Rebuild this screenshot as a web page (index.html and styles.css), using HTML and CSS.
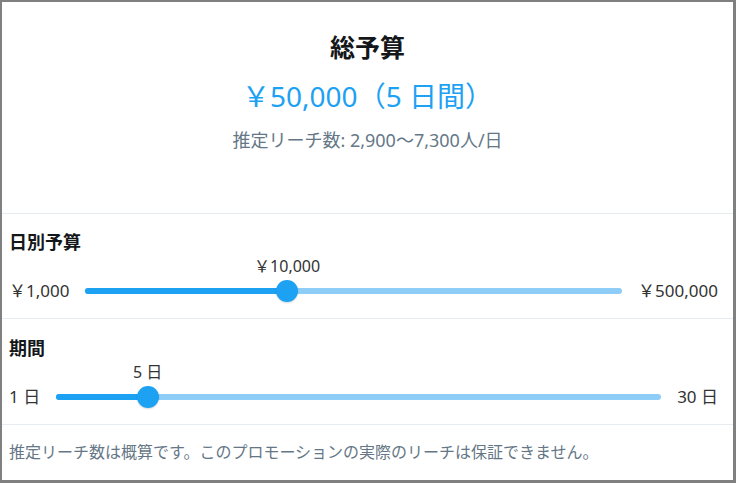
FILE: index.html
```html
<!DOCTYPE html>
<html lang="ja">
<head>
    <meta charset="UTF-8">
    <meta name="viewport" content="width=device-width, initial-scale=1.0">
    <title>予算</title>
    <link rel="stylesheet" href="styles.css">
</head>
<body>
    <div class="frame">
        <div class="summary">
            <h1>総予算</h1>
            <div class="total">￥50,000（5 日間）</div>
            <div class="reach">推定リーチ数: 2,900〜7,300人/日</div>
        </div>

        <div class="section">
            <div class="section-title">日別予算</div>
            <div class="slider-row">
                <span class="edge">￥1,000</span>
                <div class="slider">
                    <div class="value-line">
                        <span class="value" style="left: calc(11px + 0.3705 * (100% - 22px))">￥10,000</span>
                    </div>
                    <div class="track">
                        <div class="rail"></div>
                        <div class="fill" style="width: calc(11px + 0.3705 * (100% - 22px))"></div>
                        <div class="thumb" style="left: calc(11px + 0.3705 * (100% - 22px))"></div>
                    </div>
                </div>
                <span class="edge">￥500,000</span>
            </div>
        </div>

        <div class="section">
            <div class="section-title">期間</div>
            <div class="slider-row">
                <span class="edge">1 日</span>
                <div class="slider">
                    <div class="value-line">
                        <span class="value" style="left: calc(11px + 0.1379 * (100% - 22px))">5 日</span>
                    </div>
                    <div class="track">
                        <div class="rail"></div>
                        <div class="fill" style="width: calc(11px + 0.1379 * (100% - 22px))"></div>
                        <div class="thumb" style="left: calc(11px + 0.1379 * (100% - 22px))"></div>
                    </div>
                </div>
                <span class="edge">30 日</span>
            </div>
        </div>

        <div class="note">推定リーチ数は概算です。このプロモーションの実際のリーチは保証できません。</div>
    </div>
</body>
</html>
```

FILE: styles.css
```css
* {
    margin: 0;
    padding: 0;
    box-sizing: border-box;
    font-family: 'Noto Sans', 'Noto Sans CJK JP', sans-serif;
}

body {
    background: #fff;
    color: #14171a;
}

.frame {
    width: 736px;
    height: 483px;
    border: 2px solid #808080;
    border-right-width: 3px;
    border-bottom-width: 3px;
    background: #fff;
    overflow: hidden;
}

.summary {
    text-align: center;
    padding: 30px 0 61px;
    border-bottom: 1px solid #e6ecf0;
}

h1 {
    font-size: 25px;
    line-height: 30px;
    font-weight: 700;
}

.total {
    margin-top: 14px;
    font-size: 28px;
    line-height: 40px;
    color: #1da1f2;
}

.reach {
    margin-top: 12px;
    font-size: 18px;
    line-height: 24px;
    color: #657786;
}

.section {
    padding: 18px 15px 16px 7px;
    border-bottom: 1px solid #e6ecf0;
}

.section + .section {
    padding-top: 19px;
}

.section-title {
    font-size: 18px;
    line-height: 20px;
    font-weight: 700;
}

.slider-row {
    display: flex;
    align-items: flex-end;
    gap: 16px;
    margin-top: 4px;
}

.edge {
    font-size: 17px;
    line-height: 22px;
    color: #333;
    white-space: nowrap;
}

.slider {
    flex: 1;
}

.value-line {
    position: relative;
    height: 20px;
    margin-bottom: 4px;
}

.value {
    position: absolute;
    top: 0;
    transform: translateX(-50%);
    font-size: 16px;
    line-height: 20px;
    color: #333;
    white-space: nowrap;
}

.track {
    position: relative;
    height: 22px;
}

.rail,
.fill {
    position: absolute;
    left: 0;
    top: 8px;
    height: 6px;
    border-radius: 3px;
}

.rail {
    right: 0;
    background: #8ecdf8;
}

.fill {
    background: #1da1f2;
}

.thumb {
    position: absolute;
    top: 0;
    width: 22px;
    height: 22px;
    margin-left: -11px;
    border-radius: 50%;
    background: #1da1f2;
    box-shadow: 0 1px 2px rgba(0, 0, 0, 0.15);
}

.note {
    padding: 17px 7px 0;
    font-size: 16px;
    line-height: 20px;
    color: #657786;
}
```
